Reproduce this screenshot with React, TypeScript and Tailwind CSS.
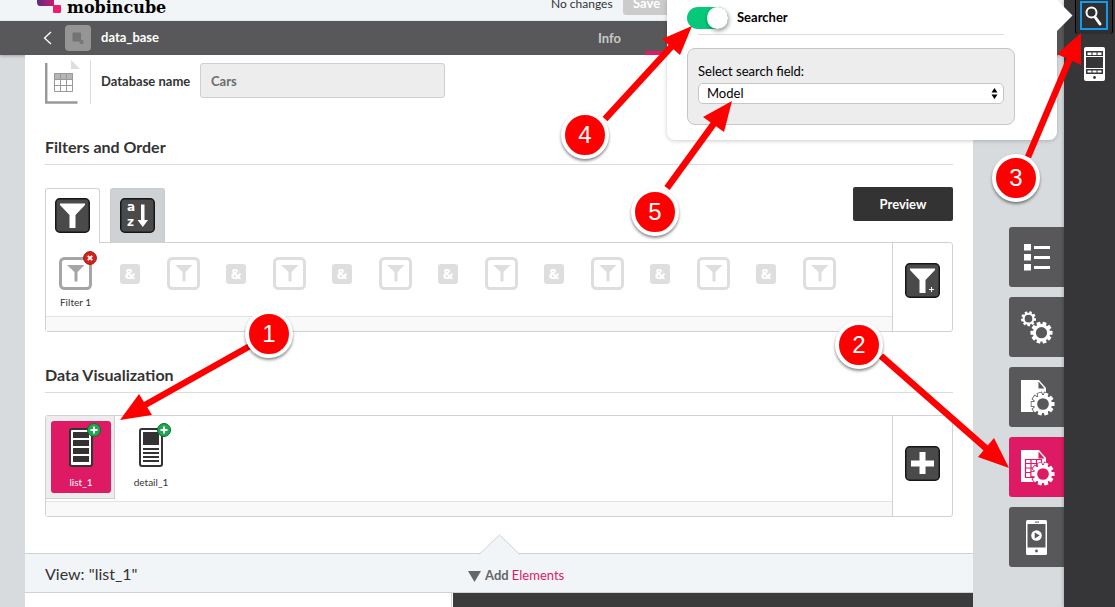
import React from 'react';

const SLOTS = [1, 2, 3, 4, 5, 6, 7];

const Gear: React.FC<{ cx: number; cy: number; r: number; teeth: number; edge?: string }> = ({ cx, cy, r, teeth, edge }) => {
  const body = r * 0.65;
  const tooth = r * 0.36;
  const cogs = Array.from({ length: teeth }, (_, i) => (i * 360) / teeth + 18);
  return (
    <g transform={`translate(${cx} ${cy})`}>
      {edge && (
        <g fill={edge} stroke={edge} strokeWidth="1.5">
          <circle r={r * 0.8} />
          {cogs.map((a) => (
            <rect key={a} x={-tooth / 2} y={-r} width={tooth} height={r * 0.4} transform={`rotate(${a})`} />
          ))}
        </g>
      )}
      <circle r={body} fill="none" stroke="#fff" strokeWidth={r * 0.28} />
      {cogs.map((a) => (
        <rect key={a} x={-tooth / 2} y={-r} width={tooth} height={r * 0.35} rx="0.5" fill="#fff" transform={`rotate(${a})`} />
      ))}
    </g>
  );
};

const PageShape: React.FC<{ bg: string }> = ({ bg }) => (
  <>
    <path d="M12 13h18l7 8v24H12z" fill="#fff" />
    <path d="M29.5 14.5v7h6z" fill={bg} />
  </>
);

const SIDE_TABS = [
  {
    label: 'Sections',
    icon: (
      <g fill="#fff">
        {[17, 27, 37].map((y) => (
          <g key={y}>
            <rect x="15" y={y} width="7" height="6.5" />
            <rect x="25" y={y + 2} width="16" height="3" />
          </g>
        ))}
      </g>
    ),
  },
  {
    label: 'Settings',
    icon: (
      <>
        <Gear cx={19.5} cy={21.7} r={7.5} teeth={9} />
        <Gear cx={32.5} cy={35.7} r={11} teeth={10} />
      </>
    ),
  },
  {
    label: 'Page settings',
    icon: (
      <>
        <PageShape bg="#58585a" />
        <Gear cx={34} cy={37} r={11.5} teeth={10} edge="#58585a" />
      </>
    ),
  },
  {
    label: 'Database settings',
    active: true,
    icon: (
      <>
        <PageShape bg="#de1a64" />
        <path d="M16.5 22.5h16v18h-16zM16.5 26.5h16M16.5 31h16M16.5 35.5h16M22 22.5v18M27.5 22.5v18" fill="none" stroke="#de1a64" strokeWidth="1.2" />
        <Gear cx={34} cy={37} r={11.5} teeth={10} edge="#de1a64" />
      </>
    ),
  },
  {
    label: 'App preview',
    icon: (
      <>
        <rect x="17" y="13" width="21" height="35" rx="1.5" fill="#fff" />
        <rect x="18.5" y="17" width="18" height="23.5" fill="#58585a" />
        <rect x="26" y="14.6" width="4" height="1" fill="#58585a" />
        <circle cx="27.5" cy="28.5" r="5.3" fill="#fff" />
        <path d="M25.7 25.4v6.2l5-3.1z" fill="#58585a" />
        <circle cx="27.5" cy="44" r="1.4" fill="#58585a" />
      </>
    ),
  },
];

const STEPS = [
  { n: 1, place: 'left-[245px] top-[310px]', line: 'M250 346L145 405', head: '120,420 139,394 152,415' },
  { n: 2, place: 'left-[835px] top-[321px]', line: 'M881 356L988 450', head: '1009,468 994,438 978,457' },
  { n: 3, place: 'left-[992px] top-[154px]', line: 'M1028 157L1070 58', head: '1081,33 1057,54 1081,65' },
  { n: 4, place: 'left-[561px] top-[111px]', line: 'M605 119L672 46', head: '692,26 662,39 680,55' },
  { n: 5, place: 'left-[631px] top-[188px]', line: 'M667 188L715 122', head: '732,101 703,117 724,132' },
];

const FilterSlot: React.FC<{ color: string }> = ({ color }) => (
  <svg className="block h-[33px] w-[33px] shrink-0" viewBox="0 0 33 33">
    <rect x="1.5" y="1.5" width="30" height="30" rx="4" fill="#fff" stroke={color} strokeWidth="3" />
    <path d="M8 8h17.5l-7 7v9.5h-3V15z" fill={color} />
  </svg>
);

const DarkIcon: React.FC<{ children: React.ReactNode }> = ({ children }) => (
  <svg className="block h-[35px] w-[35px]" viewBox="0 0 35 35">
    <rect x="0.75" y="0.75" width="33.5" height="33.5" rx="4" fill="#4a4a4a" stroke="#161616" strokeWidth="1.5" />
    {children}
  </svg>
);

const PhoneIcon: React.FC<{ detail?: boolean }> = ({ detail }) => (
  <svg className="block h-[44px] w-[34px]" viewBox="0 0 34 44">
    <rect x="0" y="5" width="24" height="39" rx="3" fill="#333" />
    <rect x="2" y="7" width="20" height="35" rx="1" fill="#fff" />
    {detail ? (
      <g fill="#333">
        <rect x="4" y="9" width="16" height="13" />
        {[25, 29, 33, 37].map((y) => (
          <rect key={y} x="4" y={y} width="16" height="2" />
        ))}
      </g>
    ) : (
      <g fill="#333">
        {[9, 17, 25, 33].map((y) => (
          <rect key={y} x="4" y={y} width="16" height="6" />
        ))}
      </g>
    )}
    <circle cx="25" cy="7" r="6.5" fill="#1fa94f" stroke="#0d6a2e" strokeWidth="1" />
    <path d="M25 3.5v7M21.5 7h7" stroke="#fff" strokeWidth="2" />
  </svg>
);

const Header: React.FC = () => (
  <header>
    <div className="flex h-[21px] items-end overflow-hidden bg-[#f1f5f8]">
      <div className="flex w-[551px] items-end pl-[36px]">
        <svg className="mb-2 block h-[13px] w-[25px]" viewBox="0 0 25 13">
          <defs>
            <linearGradient id="logo" x1="0" x2="1">
              <stop offset="0" stopColor="#5b2b82" />
              <stop offset="1" stopColor="#c91c70" />
            </linearGradient>
          </defs>
          <path d="M1 0h17v6H4Q1 6 1 2z" fill="url(#logo)" />
          <rect x="17" y="5" width="8" height="8" rx="1" fill="#ee1d6e" />
        </svg>
        <span className="ml-[6px] font-['DejaVu_Serif',serif] text-[16px] leading-[26px] font-bold text-black">mobincube</span>
      </div>
      <span className="mb-[10px] w-[61px] text-[12px] leading-[15px] whitespace-nowrap">No changes</span>
      <button type="button" className="mb-[6px] ml-[11px] h-[24px] w-[80px] rounded-[3px] bg-[#cbcbcb] pl-[10px] text-left text-[13px] leading-[16px] font-bold text-white">
        Save
      </button>
    </div>
    <nav className="flex h-[34px] items-center bg-[#58585a] shadow-[0_1px_3px_rgba(0,0,0,0.25)]">
      <button type="button" aria-label="Back" className="ml-[43px]">
        <svg className="block h-[14px] w-[9px]" viewBox="0 0 9 14" fill="none" stroke="#fff" strokeWidth="1.3">
          <path d="M8 1L1.5 7L8 13" />
        </svg>
      </button>
      <svg className="ml-[13px] block h-[26px] w-[26px]" viewBox="0 0 26 26">
        <rect width="26" height="26" rx="4" fill="#959595" />
        <rect x="7.5" y="7.5" width="8.5" height="9" rx="1" fill="#737373" />
        <rect x="14.5" y="15" width="4" height="4" rx="1" fill="#777" />
      </svg>
      <span className="ml-[10px] w-[497px] text-[13px] font-bold text-white">data_base</span>
      <button type="button" className="pt-px text-[13px] font-bold text-[#c9c9ca]">Info</button>
      <button type="button" aria-label="Design" className="ml-6 w-[60px] self-stretch border-b-4 border-[#de1a64]" />
    </nav>
  </header>
);

const SearcherPopover: React.FC = () => (
  <div className="absolute top-0 right-[58px] w-[390px] rounded-b-[8px] bg-white px-5 pt-[6px] pb-[15px] text-black shadow-[0_1px_4px_rgba(0,0,0,0.2)]">
    <label className="flex h-[23px] items-center text-[13px] font-bold">
      <input type="checkbox" defaultChecked className="peer sr-only" />
      <span className="mr-[9px] flex h-[22px] w-[41px] justify-end rounded-full bg-[#05c878]">
        <span className="h-[22px] w-[21px] rounded-full bg-white shadow-[1px_2px_4px_rgba(0,0,0,0.4)]" />
      </span>
      <span className="pt-px">Searcher</span>
    </label>
    <hr className="mt-[5px] mr-[33px] ml-[11px] border-[#dcdcdc]" />
    <div className="mt-[13px] mr-[22px] h-[77px] rounded-[8px] border border-[#c6c6c6] bg-[#ededed] px-[10px] pt-3">
      <label htmlFor="search-field" className="block text-[13px] leading-[20px]">Select search field:</label>
      <div className="relative mt-[2px]">
        <select id="search-field" className="block h-[21px] w-full appearance-none rounded-[5px] border border-[#c6c6c6] bg-white px-2 text-[13px] leading-[19px]">
          <option>Model</option>
        </select>
        <svg className="pointer-events-none absolute top-[5px] right-[6px] h-[11px] w-[7px]" viewBox="0 0 7 11">
          <path d="M3.5 0l3 4.500h-6zM3.500 11l3-4.500h-6z" />
        </svg>
      </div>
    </div>
    <svg className="absolute top-0 left-full h-[31px] w-[16px]" viewBox="0 0 16 31">
      <path d="M0 0L15.5 15.5L0 31z" fill="#fff" />
    </svg>
  </div>
);

const Steps: React.FC = () => (
  <div className="pointer-events-none absolute inset-0">
    <svg className="absolute top-0 left-0 h-[607px] w-[1115px]" viewBox="0 0 1115 607">
      {STEPS.map((s) => (
        <g key={s.n}>
          <path d={s.line} stroke="#f00" strokeWidth="6.5" />
          <polygon points={s.head} fill="#f00" />
        </g>
      ))}
    </svg>
    {STEPS.map((s) => (
      <span
        key={s.n}
        className={`absolute flex h-12 w-12 items-center justify-center rounded-full border-4 border-white bg-[#f00] font-['Liberation_Sans',sans-serif] text-[24px] leading-[28px] text-white shadow-[0_2px_3px_rgba(0,0,0,0.45)] ${s.place}`}
      >
        {s.n}
      </span>
    ))}
  </div>
);

const App: React.FC = () => (
  <div className="relative flex min-h-screen overflow-hidden bg-[#d7dbde] font-['Lato',sans-serif] text-[#333]">
    <div className="flex min-w-0 flex-1 flex-col">
      <Header />
      <div className="flex flex-1 pl-[25px]">
        <main className="flex min-w-0 flex-1 flex-col bg-white">
          <div className="px-5 pt-[5px]">
            <div className="flex items-center">
              <svg className="block h-[44px] w-[46px]" viewBox="0 0 46 44">
                <path d="M1.2 3v39.5H32.5" fill="none" stroke="#999" strokeWidth="2.5" />
                <path d="M26 0l9 9h-9z" fill="#dedede" />
                <rect x="9" y="13" width="19" height="6" fill="#b5b5b5" />
                <path d="M9.5 13.5h18v18h-18zM9.5 19.5h18M9.5 25.5h18M15.5 13.5v18M21.5 13.5v18" fill="none" stroke="#999" />
                <path d="M45.5 0v44" stroke="#dcdcdc" />
              </svg>
              <label htmlFor="db-name" className="w-[109px] pl-[10px] text-[13px] font-bold">Database name</label>
              <input
                id="db-name"
                defaultValue="Cars"
                className="mb-[3px] h-[35px] w-[245px] rounded-[3px] border border-[#cfcfcf] bg-[#ededed] px-[10px] text-[13px] font-bold text-[#6c6c6c]"
              />
            </div>

            <h2 className="mt-[31px] border-b border-[#dadde0] pb-[5px] text-[16px] leading-[24px] font-bold">Filters and Order</h2>
            <div className="mt-[22px] flex items-start">
              <button type="button" aria-label="Filters" className="relative z-10 mt-px -mb-px flex h-[55px] w-[55px] items-center justify-center rounded-t-[3px] border border-b-0 border-[#cfd2d5] bg-white pb-[2px]">
                <DarkIcon>
                  <path d="M5 5.5h25v1.5L20.5 17v13h-6V17L5 7z" fill="#fff" />
                </DarkIcon>
              </button>
              <button type="button" aria-label="Order" className="mt-px ml-[10px] flex h-[54px] w-[55px] items-center justify-center rounded-t-[3px] border border-b-0 border-[#c8cccf] bg-[#ced2d5]">
                <DarkIcon>
                  <g fill="#fff" fontSize="12" fontWeight="700" fontFamily="DejaVu Sans, sans-serif">
                    <text x="7" y="13">a</text>
                    <text x="7" y="28">z</text>
                  </g>
                  <path d="M21 6.5h3.5V22H28l-5.2 7L17.5 22H21z" fill="#fff" />
                </DarkIcon>
              </button>
              <button type="button" className="ml-auto h-[34px] w-[100px] rounded-[2px] bg-[#333] pt-px text-[13px] font-bold text-white">
                Preview
              </button>
            </div>
            <div className="flex rounded-tr-[3px] rounded-b-[3px] border border-[#cfd2d5]">
              <div className="min-w-0 flex-1">
                <div className="flex h-[73px] items-start gap-[26px] pt-[14px] pl-[11px]">
                  <div className="relative flex w-[37px] shrink-0 flex-col items-center">
                    <FilterSlot color="#a5a5a5" />
                    <span className="mt-[5px] text-[10px] leading-[14px] whitespace-nowrap">Filter 1</span>
                    <button type="button" aria-label="Remove filter" className="absolute -top-[6px] -right-[3px]">
                      <svg className="block h-[14px] w-[14px]" viewBox="0 0 14 14">
                        <circle cx="7" cy="7" r="6.4" fill="#d2241c" stroke="#a31410" />
                        <path d="M4.8 4.8l4.4 4.4M9.2 4.8L4.8 9.2" stroke="#fff" strokeWidth="1.8" />
                      </svg>
                    </button>
                  </div>
                  {SLOTS.map((slot) => (
                    <div key={slot} className="flex shrink-0 items-center gap-[27px]">
                      <span className="flex h-5 w-5 items-center justify-center rounded-[3px] bg-[#dedede] font-['Open_Sans',sans-serif] text-[14px] leading-[20px] font-bold text-white">&amp;</span>
                      <FilterSlot color="#dedede" />
                    </div>
                  ))}
                </div>
                <div className="h-[15px] border-t border-[#e3e3e3] bg-[#f9f9f9]" />
              </div>
              <div className="flex w-[60px] justify-center border-l border-[#cfd2d5] pt-5">
                <button type="button" aria-label="Add filter" className="self-start">
                  <DarkIcon>
                    <path d="M5 5.5h25v1.5L20.5 17v13h-6V17L5 7z" fill="#fff" />
                    <path d="M26.5 24v5M24 26.5h5" stroke="#fff" />
                  </DarkIcon>
                </button>
              </div>
            </div>

            <h2 className="mt-[31px] border-b border-[#dadde0] pb-[5px] text-[16px] leading-[24px] font-bold">Data Visualization</h2>
            <div className="mt-[22px] flex rounded-[3px] border border-[#cfd2d5]">
              <div className="min-w-0 flex-1">
                <div className="flex h-[85px] items-start text-[10px] leading-[14px]">
                  <div className="border-r border-b border-[#cfd2d5] bg-[#ededed] p-[5px] pr-[3px]">
                    <button type="button" className="flex h-[72px] w-[60px] flex-col items-center rounded-[3px] bg-[#de1a64] pt-[2px] pl-[10px] text-white">
                      <PhoneIcon />
                      <span className="mt-2 mr-[10px]">list_1</span>
                    </button>
                  </div>
                  <button type="button" className="mt-[5px] ml-[6px] flex h-[72px] w-[60px] flex-col items-center pt-[2px] pl-[10px]">
                    <PhoneIcon detail />
                    <span className="mt-2 mr-[10px]">detail_1</span>
                  </button>
                </div>
                <div className="h-[15px] border-t border-[#e3e3e3] bg-[#f9f9f9]" />
              </div>
              <div className="flex w-[60px] items-start justify-center border-l border-[#cfd2d5] pt-[30px]">
                <button type="button" aria-label="Add view">
                  <DarkIcon>
                    <path d="M14.5 6h6v8.500H29v6h-8.500V28h-6v-7.500H6v-6h8.500z" fill="#fff" />
                  </DarkIcon>
                </button>
              </div>
            </div>
          </div>

          <section className="relative mt-[36px] flex h-[40px] items-center border-y border-[#cfd2d5] bg-[#f1f5f8] px-5">
            <svg className="absolute -top-[20px] left-[454px] h-[21px] w-[41px]" viewBox="0 0 41 21">
              <path d="M0 20.5L20.5 1L41 20.5" fill="#f1f5f8" stroke="#cfd2d5" />
              <rect x="1" y="20" width="39" height="1" fill="#f1f5f8" />
            </svg>
            <h3 className="w-[423px] pt-[2px] text-[16px] leading-[24px]">View: &quot;list_1&quot;</h3>
            <button type="button" className="flex items-center pt-[5px] text-[13px] font-bold text-[#666]">
              <svg className="mt-[2px] mr-1 block h-[11px] w-[13px]" viewBox="0 0 13 11">
                <path d="M0 0h13L6.5 11z" fill="#666" />
              </svg>
              Add&nbsp;<span className="font-normal text-[#de1a64]">Elements</span>
            </button>
          </section>
          <div className="flex flex-1">
            <div className="w-[427px] border-r border-[#d5d5d5]" />
            <div className="ml-px flex-1 bg-[#3b3b3b]" />
          </div>
        </main>
        <aside className="flex w-[91px] flex-col items-end gap-[10px] pt-[172px]">
          {SIDE_TABS.map((tab) => (
            <button
              key={tab.label}
              type="button"
              aria-label={tab.label}
              className={`rounded-l-[3px] ${tab.active ? 'bg-[#de1a64]' : 'bg-[#58585a]'}`}
            >
              <svg className="block h-[60px] w-[55px]" viewBox="0 0 55 60">{tab.icon}</svg>
            </button>
          ))}
        </aside>
      </div>
    </div>

    <aside className="relative flex w-[51px] shrink-0 flex-col items-center bg-[#363638] pt-px pl-[9px] shadow-[-1px_0_3px_rgba(0,0,0,0.2)]">
      <button type="button" aria-label="Searcher" className="mr-px -mt-1 flex h-[37px] w-[38px] items-center justify-center rounded-[3px] border-x border-black bg-[#2f2f31]">
        <svg className="block h-[29px] w-[28px]" viewBox="0 0 28 29">
          <rect x="1" y="1" width="26" height="27" fill="none" stroke="#0f9bf0" strokeWidth="2" />
          <circle cx="11.5" cy="11.5" r="5" fill="none" stroke="#fff" strokeWidth="2" />
          <path d="M15 16l5 7" stroke="#fff" strokeWidth="3" strokeLinecap="round" />
        </svg>
      </button>
      <button type="button" aria-label="Phone bars" className="mt-[13px] pb-px">
        <svg className="block h-[34px] w-[21px]" viewBox="0 0 21 34">
          <rect width="21" height="34" rx="2" fill="#fff" />
          <rect x="2" y="4" width="17" height="23" fill="#363638" />
          <path d="M2 9.500h17M2 21.500h17" stroke="#fff" />
          <path d="M3.500 5.500h4v2.500h-4zM8.500 5.500h4v2.500h-4zM13.500 5.500h4v2.500h-4zM3.500 23.500h4v2h-4zM8.500 23.500h4v2h-4zM13.500 23.500h4v2h-4z" fill="#fff" />
          <circle cx="10.5" cy="30.5" r="1.4" fill="#363638" />
        </svg>
      </button>
    </aside>

    <SearcherPopover />
    <Steps />
  </div>
);

export default App;
